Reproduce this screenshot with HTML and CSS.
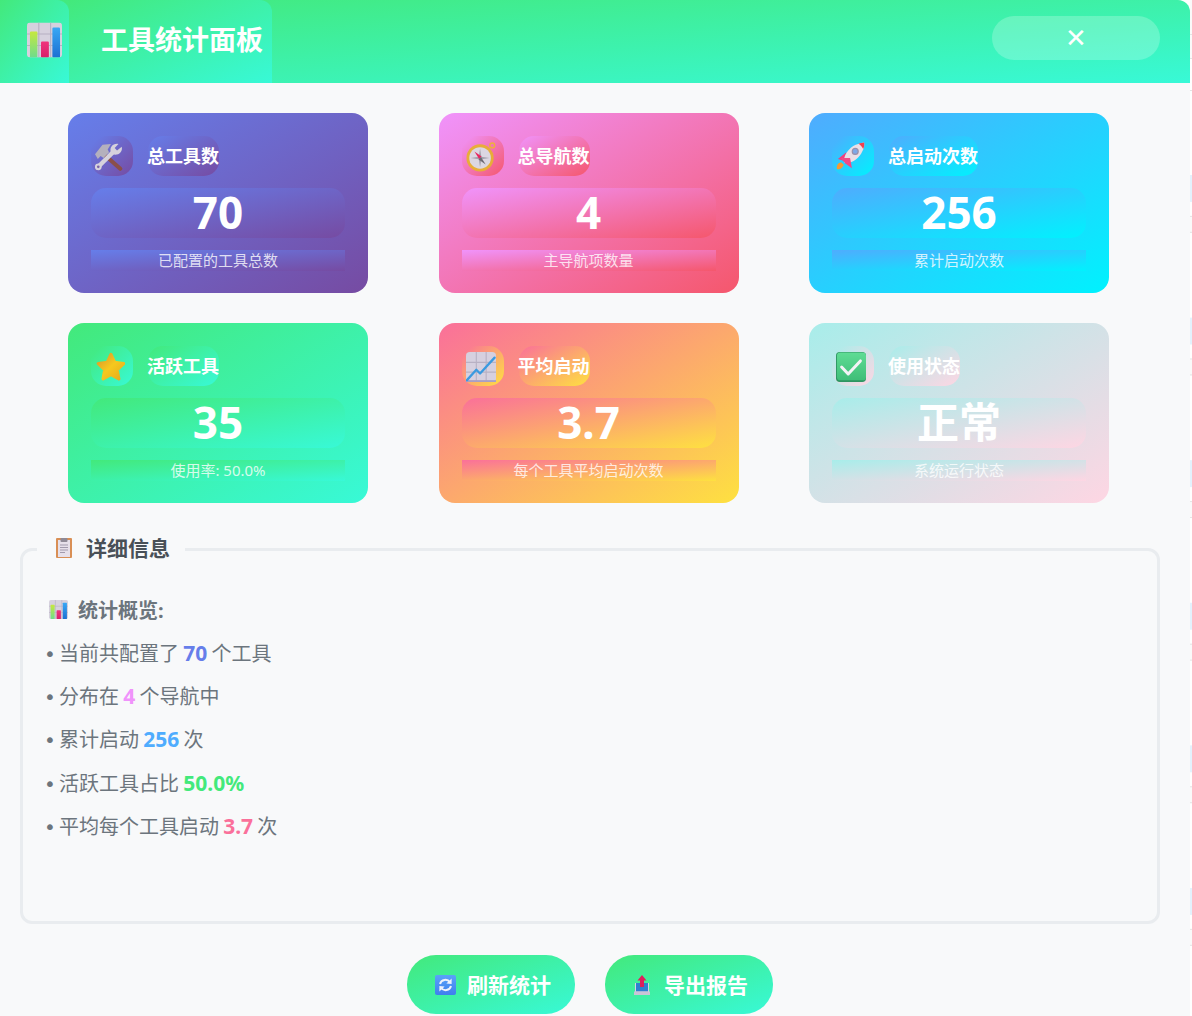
FILE: index.html
```html
<!DOCTYPE html>
<html lang="zh-CN">
<head>
<meta charset="utf-8">
<title>工具统计面板</title>
<link rel="stylesheet" href="styles.css">
</head>
<body>
<div class="page">
  <div class="window">
    <header class="header">
      <div class="header-icon grad-green">
        <svg class="ic-header" viewBox="0 0 32 32">
          <defs>
            <linearGradient id="gb1" x1="0" y1="0" x2="0" y2="1"><stop offset="0" stop-color="#c6e83f"/><stop offset="1" stop-color="#6fdc8c"/></linearGradient>
            <linearGradient id="gb2" x1="0" y1="0" x2="0" y2="1"><stop offset="0" stop-color="#f0347c"/><stop offset="1" stop-color="#d8206a"/></linearGradient>
            <linearGradient id="gb3" x1="0" y1="0" x2="0" y2="1"><stop offset="0" stop-color="#38a8f5"/><stop offset="1" stop-color="#1c70d2"/></linearGradient>
            <linearGradient id="gstar" x1="0" y1="0" x2="1" y2="1"><stop offset="0" stop-color="#d9952a"/><stop offset=".5" stop-color="#f5c81e"/><stop offset="1" stop-color="#e6ab1c"/></linearGradient>
            <linearGradient id="gcheck" x1="0" y1="0" x2="0" y2="1"><stop offset="0" stop-color="#5fdc94"/><stop offset="1" stop-color="#3fbe78"/></linearGradient>
            <linearGradient id="gblue" x1="0" y1="0" x2="0" y2="1"><stop offset="0" stop-color="#5aa2f8"/><stop offset="1" stop-color="#3f7fee"/></linearGradient>
            <symbol id="bars" viewBox="0 0 32 32">
              <rect width="32" height="32" rx="3" fill="#d6d1de"/>
              <path d="M10.8 0v32M21.6 0v32M0 10.5h32M0 21h32" stroke="#b6b0c2" stroke-width="1" fill="none"/>
              <rect x="2.7" y="8.2" width="6.8" height="23.8" rx="1" fill="url(#gb1)"/>
              <rect x="12.8" y="17.4" width="7.2" height="14.6" rx="1" fill="url(#gb2)"/>
              <rect x="23.2" y="4.6" width="7" height="27.4" rx="1" fill="url(#gb3)"/>
            </symbol>
          </defs>
          <use href="#bars"/>
        </svg>
      </div>
      <h1 class="header-title grad-green">工具统计面板</h1>
      <button class="close-btn">✕</button>
    </header>

    <main class="content">
      <section class="cards">
        <article class="card grad-blue">
          <div class="card-head">
            <div class="card-icon grad-blue">
              <svg class="ic-card" viewBox="2 0 32 32">
                <path d="M9 11 L29 28.5" stroke="#8a4f4a" stroke-width="4.4" stroke-linecap="round" fill="none"/>
                <path d="M2 13 L10 3 L19 2 L15.5 8 L17 11 L11 17 L8 15 L5 18 Z" fill="#b4b0bd"/>
                <path d="M5 27 L22 10" stroke="#d6d2dc" stroke-width="4.6" stroke-linecap="round" fill="none"/>
                <path d="M19 11 C17 6 21 1 27 2 L23 6.5 L25.5 9 L30.5 5 C32 11 26 15 21 13 Z" fill="#d6d2dc"/>
                <circle cx="5.5" cy="26.5" r="3.6" fill="#d6d2dc"/><circle cx="5.5" cy="26.5" r="1.4" fill="#7a63a8"/>
              </svg>
            </div>
            <div class="card-title grad-blue">总工具数</div>
          </div>
          <div class="card-value grad-blue">70</div>
          <div class="card-desc grad-blue">已配置的工具总数</div>
        </article>

        <article class="card grad-pink">
          <div class="card-head">
            <div class="card-icon grad-pink">
              <svg class="ic-card" viewBox="0 0 32 32">
                <circle cx="28" cy="3.6" r="2.6" fill="none" stroke="#eeb13a" stroke-width="1.5"/>
                <circle cx="15" cy="17" r="14.5" fill="#e8ad38"/>
                <circle cx="15" cy="17" r="11.5" fill="#dcd7e2"/>
                <path d="M15 7 L16.4 15.6 L25 17 L16.4 18.4 L15 27 L13.6 18.4 L5 17 L13.6 15.6 Z" fill="#a5a1ad"/>
                <path d="M9 10 L16.6 15.4 L14 18 Z" fill="#e8265f"/>
                <path d="M21 24 L13.4 18.6 L16 16 Z" fill="#6d6a74"/>
              </svg>
            </div>
            <div class="card-title grad-pink">总导航数</div>
          </div>
          <div class="card-value grad-pink">4</div>
          <div class="card-desc grad-pink">主导航项数量</div>
        </article>

        <article class="card grad-sky">
          <div class="card-head">
            <div class="card-icon grad-sky">
              <svg class="ic-card" viewBox="0 0 32 32">
                <path d="M1 29 C0 25 3 21 6 22 L8 24 C8 27 4 30 1 29 Z" fill="#f59a35"/>
                <path d="M11 11 L2 18 L8 20 L12 23 Z" fill="#ef3f7f"/>
                <path d="M9 22 C7 15 14 6 21 3 C25 1.5 28 1 30 .5 C30.5 3 30 7 28 10 C25 17 16 24 9 22 Z" fill="#e9dfe6"/>
                <path d="M24 1.8 C26 1.2 28.5 .8 30 .5 C30.4 3 30 5.5 29 7.5 C28 5 26 3 24 1.8 Z" fill="#f0404f"/>
                <path d="M5 17 L15 17 L17 28 L10 23 Z" fill="#f04a86"/>
                <circle cx="20.5" cy="10" r="3.2" fill="#7fa8e6" stroke="#9a8fa8" stroke-width="1.2"/>
              </svg>
            </div>
            <div class="card-title grad-sky">总启动次数</div>
          </div>
          <div class="card-value grad-sky">256</div>
          <div class="card-desc grad-sky">累计启动次数</div>
        </article>

        <article class="card grad-green">
          <div class="card-head">
            <div class="card-icon grad-green">
              <svg class="ic-card" viewBox="-1 0 32 32">
                <path d="M16 2.5 L20 11 L29.5 12.3 L22.6 19 L24.4 28.6 L16 24 L7.6 28.6 L9.4 19 L2.5 12.3 L12 11 Z" fill="url(#gstar)" stroke="url(#gstar)" stroke-width="3.4" stroke-linejoin="round"/>
              </svg>
            </div>
            <div class="card-title grad-green">活跃工具</div>
          </div>
          <div class="card-value grad-green">35</div>
          <div class="card-desc grad-green">使用率: 50.0%</div>
        </article>

        <article class="card grad-sun">
          <div class="card-head">
            <div class="card-icon grad-sun">
              <svg class="ic-card" viewBox="0 0 32 32">
                <rect width="32" height="32" rx="4" fill="#d6d0df"/>
                <path d="M11 0v32M21.5 0v32M0 11h32M0 21.5h32" stroke="#b8b1c4" stroke-width="1.2" fill="none"/>
                <path d="M0 32 v-2 h32 v2 Z" fill="#a99fc4"/>
                <path d="M1 30 L11 19 L15 23 L30.5 6" stroke="#3a9ae0" stroke-width="2.4" fill="none" stroke-linejoin="round" stroke-linecap="round"/>
              </svg>
            </div>
            <div class="card-title grad-sun">平均启动</div>
          </div>
          <div class="card-value grad-sun">3.7</div>
          <div class="card-desc grad-sun">每个工具平均启动次数</div>
        </article>

        <article class="card grad-mist">
          <div class="card-head">
            <div class="card-icon grad-mist">
              <svg class="ic-card" viewBox="0 0 32 32">
                <rect width="32" height="32" rx="4" fill="#2f9562"/>
                <rect x="1" y="0.6" width="31" height="29.6" rx="3.6" fill="url(#gcheck)"/>
                <path d="M6 16 L13 23.5 L26 9.5" stroke="#f4f3f6" stroke-width="3.2" fill="none" stroke-linecap="round" stroke-linejoin="round"/>
              </svg>
            </div>
            <div class="card-title grad-mist">使用状态</div>
          </div>
          <div class="card-value card-value-cjk grad-mist">正常</div>
          <div class="card-desc grad-mist">系统运行状态</div>
        </article>
      </section>

      <fieldset class="details">
        <legend class="details-legend">
          <svg class="ic-clip" viewBox="0 0 16 20">
            <rect width="16" height="20" rx="1" fill="#d98f55"/>
            <rect x="2" y="2" width="12" height="17" fill="#e6e0ea"/>
            <rect x="4.5" y="0" width="7" height="4" rx="1" fill="#8f8a96"/>
            <path d="M4 7h8M4 9.5h8M4 12h8M4 14.5h5" stroke="#a29bad" stroke-width="1"/>
          </svg>
          <span class="legend-text">详细信息</span>
        </legend>
        <h2 class="details-heading">
          <svg class="ic-small" viewBox="0 0 32 32"><use href="#bars"/></svg>
          <span>统计概览:</span>
        </h2>
        <p class="stat-line"><span class="dot">•</span> 当前共配置了 <b class="c-blue">70</b> 个工具</p>
        <p class="stat-line"><span class="dot">•</span> 分布在 <b class="c-pink">4</b> 个导航中</p>
        <p class="stat-line"><span class="dot">•</span> 累计启动 <b class="c-sky">256</b> 次</p>
        <p class="stat-line"><span class="dot">•</span> 活跃工具占比 <b class="c-green">50.0%</b></p>
        <p class="stat-line"><span class="dot">•</span> 平均每个工具启动 <b class="c-sun">3.7</b> 次</p>
      </fieldset>

      <div class="actions">
        <button class="action grad-green">
          <svg class="ic-action" viewBox="0 0 21 20">
            <rect width="21" height="20" rx="2" fill="url(#gblue)"/>
            <path d="M5 9 A5.6 5.6 0 0 1 15 7.2" stroke="#eef1fb" stroke-width="2" fill="none"/>
            <path d="M16.6 3.6 L16.6 9 L11.4 8.4 Z" fill="#eef1fb"/>
            <path d="M16 11 A5.6 5.6 0 0 1 6 12.8" stroke="#eef1fb" stroke-width="2" fill="none"/>
            <path d="M4.4 16.4 L4.4 11 L9.6 11.6 Z" fill="#eef1fb"/>
          </svg>
          <span class="action-text">刷新统计</span>
        </button>
        <button class="action grad-green">
          <svg class="ic-action-narrow" viewBox="0 0 16 20">
            <path d="M1 8 h14 v12 h-14 Z" fill="#d8d3e2"/>
            <path d="M2 8 h12 v8.5 h-12 Z" fill="#2f7fd0"/>
            <path d="M0 16.5 h16 v3.5 h-16 Z" fill="#c9c3d6"/>
            <path d="M8 0 L12.5 5.5 H10 V12 H6 V5.5 H3.5 Z" fill="#dc1f5c"/>
          </svg>
          <span class="action-text">导出报告</span>
        </button>
      </div>
    </main>
  </div>
  <aside class="edge">
    <div class="edge-top"></div>
    <div class="edge-rows"></div>
  </aside>
</div>
</body>
</html>
```

FILE: styles.css
```css
* { box-sizing: border-box; }
html, body { margin: 0; padding: 0; height: 100%; overflow: hidden; background: #fff; }
body { font-family: "Noto Sans", "Noto Sans CJK SC", sans-serif; }

.grad-blue  { background-image: linear-gradient(to bottom right, #667eea, #764ba2); }
.grad-pink  { background-image: linear-gradient(to bottom right, #f093fb, #f5576c); }
.grad-sky   { background-image: linear-gradient(to bottom right, #4facfe, #00f2fe); }
.grad-green { background-image: linear-gradient(to bottom right, #43e97b, #38f9d7); }
.grad-sun   { background-image: linear-gradient(to bottom right, #fa709a, #fee140); }
.grad-mist  { background-image: linear-gradient(to bottom right, #a8edea, #fed6e3); }

.page { display: flex; width: 1192px; height: 1016px; overflow: hidden; }
.window { width: 1190px; height: 1016px; flex: none; background: #f8f9fa; border-top-right-radius: 12px; overflow: hidden; }

.edge { width: 2px; flex: none; display: flex; flex-direction: column; height: 1016px; background: #fff; }
.edge-top {
  height: 175px; flex: none;
  background-image: linear-gradient(to bottom, #fafafa 0 34px, #e4e4e4 34px 35px, #fafafa 35px 58px, #e4e4e4 58px 59px, #fff 59px 90px, #e4e4e4 90px 91px, #fff 91px);
}
.edge-rows {
  flex: 1;
  background-image: linear-gradient(to bottom, #e3f2fd 0 27px, #fff 27px 41px, #e4e4e4 41px 42px, #fafafa 42px 57px, #e4e4e4 57px 58px, #fff 58px);
  background-size: 2px 142.6px;
}

.header { height: 83px; display: flex; align-items: flex-start; color: #fff; background-image: linear-gradient(to bottom right, #43e97b, #38f9d7); }
.header-icon { width: 69px; height: 83px; flex: none; border-top-right-radius: 12px; padding: 22px 0 0 27px; }
.ic-header { display: block; width: 35px; height: 36px; }
.header-title { margin: 0; width: 203px; height: 83px; flex: none; padding: 0 0 0 32px; font-size: 27px; line-height: 79px; font-weight: 700; border-top-right-radius: 12px; white-space: nowrap; }
.close-btn { margin: 16px 30px 0 auto; width: 168px; height: 44px; border: 0; border-radius: 22px; background: rgba(255, 255, 255, .22); color: #fff; font: 26px/44px "DejaVu Sans", sans-serif; padding: 0; }

.content { padding: 30px 30px 0 20px; }

.cards { display: grid; grid-template-columns: repeat(3, 300px); column-gap: 70.5px; row-gap: 30px; padding-left: 48px; }
.card { height: 180px; border-radius: 16px; padding: 23px 23px 0; color: #fff; display: flex; flex-direction: column; }
.card-head { display: flex; height: 40px; flex: none; }
.card-icon { width: 42px; height: 40px; border-radius: 15px; padding: 6px 0 0 4px; flex: none; }
.ic-card { display: block; width: 30px; height: 30px; }
.card-title { margin-left: 15px; height: 40px; border-radius: 15px; font-size: 18px; line-height: 41px; font-weight: 700; white-space: nowrap; text-indent: -1px; }
.card-value { height: 50px; margin-top: 12px; border-radius: 15px; text-align: center; font-size: 44px; line-height: 48px; font-weight: 700; }
.card-value-cjk { font-size: 42px; }
.card-desc { height: 21px; margin-top: 12px; text-align: center; font-size: 15px; line-height: 21px; color: rgba(255, 255, 255, .8); }

.details { margin: 30px 0 0; padding: 0 23px; width: 1140px; height: 391px; min-width: 0; border: 3px solid #e9ecef; border-radius: 12px; color: #6c757d; }
.details-legend { margin-left: -9px; padding: 0 15px 0 17px; height: 33px; display: flex; align-items: center; font-size: 21px; font-weight: 700; color: #495057; }
.legend-text { padding-bottom: 6px; }
.ic-clip { width: 16px; height: 20px; margin: -4px 14px 0 2px; flex: none; }
.details-heading { margin: 21px 0 0 3px; height: 45px; display: flex; align-items: center; font-size: 20px; font-weight: 700; }
.ic-small { width: 19px; height: 19px; margin-right: 10px; flex: none; }
.stat-line { margin: 0; height: 43.2px; font-size: 20px; line-height: 43.2px; white-space: pre; word-spacing: -1px; }
.stat-line b { font-size: 21px; }
.dot { font-family: "DejaVu Sans", sans-serif; margin-left: -2px; letter-spacing: -1px; }
.c-blue { color: #667eea; }
.c-pink { color: #f093fb; }
.c-sky { color: #4facfe; }
.c-green { color: #43e97b; }
.c-sun { color: #fa709a; }

.actions { display: flex; justify-content: center; gap: 30px; margin-top: 31px; }
.action { width: 168px; height: 59px; border: 0; border-radius: 29px; color: #fff; font-family: inherit; font-size: 21px; font-weight: 700; display: flex; align-items: center; justify-content: center; padding: 0 0 0 4px; }
.action-text { padding-bottom: 2px; }
.ic-action { width: 21px; height: 20px; margin-right: 11px; flex: none; }
.ic-action-narrow { width: 16px; height: 20px; margin-right: 14px; flex: none; }
```
